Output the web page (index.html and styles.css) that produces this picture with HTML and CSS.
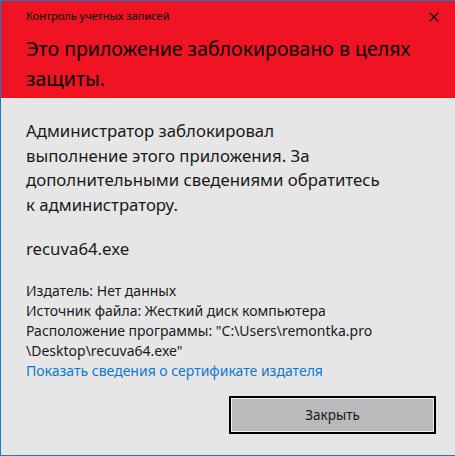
FILE: index.html
```html
<!DOCTYPE html>
<html lang="ru">
<head>
<meta charset="utf-8">
<link rel="stylesheet" href="styles.css">
</head>
<body>
<div class="window">
  <div class="header">
    <div class="titlebar">
      <span class="title">Контроль учетных записей</span>
      <svg class="close" width="10" height="10" viewBox="0 0 10 10"><path d="M0.5 0.5 L9.5 9.5 M9.5 0.5 L0.5 9.5" stroke="#000" stroke-width="1.1" fill="none"/></svg>
    </div>
    <div class="heading">Это приложение заблокировано в целях защиты.</div>
  </div>
  <div class="content">
    <p class="message">Администратор заблокировал<br>выполнение этого приложения. За<br>дополнительными сведениями обратитесь<br>к администратору.</p>
    <p class="file">recuva64.exe</p>
    <div class="details">
      <div>Издатель: Нет данных</div>
      <div>Источник файла: Жесткий диск компьютера</div>
      <div>Расположение программы: "C:\Users\remontka.pro<br>\Desktop\recuva64.exe"</div>
      <a class="link" href="#">Показать сведения о сертификате издателя</a>
    </div>
    <div class="actions">
      <button class="btn">Закрыть</button>
    </div>
  </div>
</div>
</body>
</html>
```
FILE: styles.css
```css
* { box-sizing: border-box; }
html, body { margin: 0; padding: 0; }
body {
  width: 455px;
  height: 456px;
  overflow: hidden;
  font-family: "Noto Sans", "Open Sans", sans-serif;
  color: #000;
}
.window {
  width: 455px;
  height: 456px;
  border-top: 1px solid #1979ca;
  border-left: 1px solid #1979ca;
  border-bottom: 1px solid #1979ca;
  background: #e6e6e6;
  display: flex;
  flex-direction: column;
}
.header {
  background: #ef1324;
  height: 97px;
  padding: 0 0 0 25px;
}
.titlebar {
  display: flex;
  align-items: center;
  justify-content: space-between;
  height: 32px;
  padding-right: 16px;
}
.title {
  font-size: 11px;
  line-height: 14px;
  margin-top: -2px;
}
.close { display: block; margin-top: -1px; }
.heading {
  font-size: 19.5px;
  line-height: 30px;
  width: 400px;
  margin-top: 1px;
}
.content {
  padding: 21px 0 0 25px;
  flex: 1;
}
.message {
  margin: 0;
  font-size: 16.8px;
  line-height: 24.5px;
  color: #1a1a1a;
}
.file {
  margin: 20px 0 0;
  font-size: 16.8px;
  line-height: 24px;
  color: #1a1a1a;
}
.details {
  margin-top: 20px;
  font-size: 14px;
  line-height: 20px;
  color: #1a1a1a;
}
.link {
  display: block;
  color: #0a79d4;
  text-decoration: none;
}
.actions {
  display: flex;
  justify-content: flex-end;
  padding-right: 19px;
  margin-top: 15px;
}
.btn {
  width: 207px;
  height: 38px;
  background: #bab9bb;
  border: 2px solid #000;
  box-shadow: inset 0 0 0 1px #f0f0f0;
  font-family: "Noto Sans", "Open Sans", sans-serif;
  font-size: 13.5px;
  color: #1a1a1a;
  padding: 0;
}
```
